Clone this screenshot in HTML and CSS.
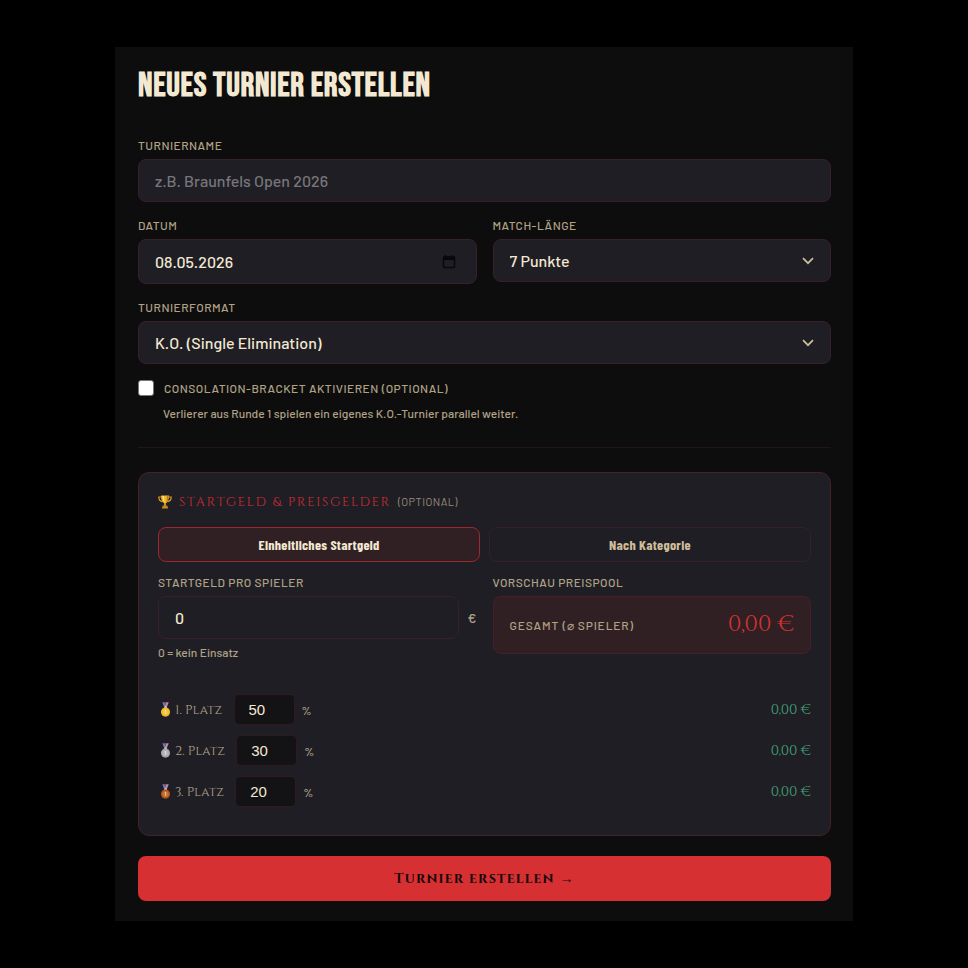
FILE: index.html
```html
<!DOCTYPE html>
<html lang="de">
<head>
<meta charset="utf-8">
<meta name="viewport" content="width=device-width, initial-scale=1">
<title>Neues Turnier erstellen</title>
<link rel="stylesheet" href="styles.css">
</head>
<body>
<svg class="defs" aria-hidden="true">
  <symbol id="medal" viewBox="0 0 12 16">
    <path d="M2.500 0h2.600L7 5.500 5 6.500z" fill="#6a78b8"/>
    <path d="M9.500 0H6.900L5 5.500l2 1z" fill="#b98cae"/>
    <path d="M5.200 0h1.600L6 2.500z" fill="#c44b5c"/>
    <rect x="4.700" y="4.800" width="2.600" height="1.800" rx=".5" fill="#d9c7b0"/>
    <circle cx="6" cy="10.800" r="5" fill="currentColor"/>
    <circle cx="6" cy="10.800" r="3.400" fill="#fff" fill-opacity=".18"/>
    <path d="M5.200 9.600l1-.7v4" fill="none" stroke="#fff" stroke-opacity=".6" stroke-width="1"/>
  </symbol>
</svg>
<main class="panel">
  <h1>NEUES TURNIER ERSTELLEN</h1>
  <form class="form">
    <div class="field">
      <label for="name">TURNIERNAME</label>
      <input class="control" id="name" type="text" placeholder="z.B. Braunfels Open 2026">
    </div>
    <div class="columns">
      <div class="field">
        <label for="date">DATUM</label>
        <div class="date control">
          <input id="date" type="text" inputmode="numeric" value="08.05.2026">
          <button class="picker" type="button" aria-label="Kalender öffnen">
            <svg viewBox="0 0 14 14" width="14" height="14"><path d="M3.500 0v2M10.500 0v2" stroke="#08080a" stroke-width="1.500"/><rect x="1.500" y="2" width="11" height="10.500" rx="1" fill="none" stroke="#08080a" stroke-width="1.500"/><path d="M1 1.500h12v3.500H1z" fill="#08080a"/></svg>
          </button>
        </div>
      </div>
      <div class="field">
        <label for="length">MATCH-LÄNGE</label>
        <div class="select">
          <select class="control" id="length"><option>7 Punkte</option></select>
          <svg class="chevron" viewBox="0 0 12 8" aria-hidden="true"><path d="M1 1.200l5 5 5-5"/></svg>
        </div>
      </div>
    </div>
    <div class="field">
      <label for="format">TURNIERFORMAT</label>
      <div class="select">
        <select class="control" id="format"><option>K.O. (Single Elimination)</option></select>
        <svg class="chevron" viewBox="0 0 12 8" aria-hidden="true"><path d="M1 1.200l5 5 5-5"/></svg>
      </div>
    </div>
    <div class="consolation">
      <div class="check">
        <input id="consolation" type="checkbox">
        <label for="consolation">CONSOLATION-BRACKET AKTIVIEREN (OPTIONAL)</label>
      </div>
      <p class="hint">Verlierer aus Runde 1 spielen ein eigenes K.O.-Turnier parallel weiter.</p>
    </div>
    <hr>
    <section class="card">
      <h2>
        <svg class="trophy" viewBox="0 0 14 14" aria-hidden="true">
          <path d="M3.500 2H.8c0 3 1.200 4.300 3.600 4.600M10.500 2h2.700c0 3-1.200 4.300-3.600 4.600" fill="none" stroke="#d99a22" stroke-width="1.200"/>
          <path d="M3 .5h8c0 4-1 7-3.200 7.800v2.500H6.200V8.300C4 7.500 3 4.500 3 .5z" fill="#eeb52c"/>
          <path d="M4.500 1h1.500c0 3 .3 5 1 6.500C5.300 6.500 4.500 4 4.500 1z" fill="#ffe07a"/>
          <path d="M9 1h1.500c-.2 3.500-1 5.500-2.500 6.500C8.800 5.500 9 3.500 9 1z" fill="#b97916"/>
          <path d="M4.800 10.500h4.400l1 3H3.800z" fill="#c98a1c"/>
        </svg>
        <span class="title">STARTGELD &amp; PREISGELDER</span>
        <span class="optional">(OPTIONAL)</span>
      </h2>
      <div class="tabs">
        <button class="tab active" type="button">Einheitliches Startgeld</button>
        <button class="tab" type="button">Nach Kategorie</button>
      </div>
      <div class="columns">
        <div class="field">
          <label for="fee">STARTGELD PRO SPIELER</label>
          <div class="fee">
            <input class="control" id="fee" type="text" inputmode="decimal" value="0">
            <span>€</span>
          </div>
          <p class="hint">0 = kein Einsatz</p>
        </div>
        <div class="field">
          <div class="caption">VORSCHAU PREISPOOL</div>
          <div class="pool">
            <span class="pool-label">GESAMT (⌀ SPIELER)</span>
            <output class="pool-total">0,00 €</output>
          </div>
        </div>
      </div>
      <div class="places">
        <div class="place">
          <svg class="medal gold" aria-hidden="true"><use href="#medal"/></svg>
          <label for="p1">1. Platz</label>
          <input id="p1" type="text" inputmode="numeric" value="50">
          <span class="percent">%</span>
          <output class="amount">0,00 €</output>
        </div>
        <div class="place">
          <svg class="medal silver" aria-hidden="true"><use href="#medal"/></svg>
          <label for="p2">2. Platz</label>
          <input id="p2" type="text" inputmode="numeric" value="30">
          <span class="percent">%</span>
          <output class="amount">0,00 €</output>
        </div>
        <div class="place">
          <svg class="medal bronze" aria-hidden="true"><use href="#medal"/></svg>
          <label for="p3">3. Platz</label>
          <input id="p3" type="text" inputmode="numeric" value="20">
          <span class="percent">%</span>
          <output class="amount">0,00 €</output>
        </div>
      </div>
    </section>
    <button class="submit" type="submit">Turnier erstellen →</button>
  </form>
</main>
</body>
</html>
```
FILE: styles.css
```css
:root {
  --cream: #f3e9d2;
  --muted: #b0a285;
  --line: #38202a;
  --field: #1f1e25;
  --red: #d73032;
  --sans: Barlow, Roboto, sans-serif;
  --serif: Cinzel, "Liberation Serif", serif;
}

* { box-sizing: border-box; }

body {
  margin: 0;
  padding: 47px 24px;
  background: #000;
  color: var(--cream);
  font: 500 16px/20px var(--sans);
}

h1, h2, p { margin: 0; }
input, select, button { margin: 0; font: inherit; color: inherit; }
.defs { display: none; }

.panel {
  max-width: 738px;
  margin: 0 auto;
  padding: 20px 22px 20px 23px;
  background: #0d0d0e;
}

h1 {
  margin-bottom: 33px;
  font: bold 34px/38px "Bebas Neue", "Liberation Sans Narrow", sans-serif;
  letter-spacing: 0.02em;
}

.form { display: flex; flex-direction: column; gap: 16px; }
.field { display: flex; flex-direction: column; min-width: 0; }

.field > label, .caption {
  margin-bottom: 7px;
  color: var(--muted);
  font-size: 12px;
  line-height: 14px;
  letter-spacing: 0.04em;
}

.control {
  width: 100%;
  height: 43px;
  padding: 0 16px;
  border: 1px solid var(--line);
  border-radius: 8px;
  background: var(--field);
}
.control::placeholder { color: #77767a; opacity: 1; }

.columns {
  display: grid;
  grid-template-columns: 1fr 1fr;
  gap: 16px;
  align-items: start;
}

.date { display: flex; align-items: center; height: 45px; }
.date input {
  flex: 1;
  min-width: 0;
  padding: 0;
  border: 0;
  background: none;
}
.picker { display: flex; padding: 0 4px; border: 0; background: none; }

.select { position: relative; }
.select select { appearance: none; }
.chevron {
  position: absolute;
  top: 18px;
  right: 17px;
  width: 12px;
  height: 8px;
  fill: none;
  stroke: #cbbd9f;
  stroke-width: 1.700;
  pointer-events: none;
}

.check { display: flex; align-items: center; gap: 10px; height: 16px; }
.check input {
  appearance: none;
  width: 16px;
  height: 16px;
  border: 1px solid #777;
  border-radius: 3px;
  background: #fff;
}
.check label {
  color: var(--muted);
  font-size: 12px;
  line-height: 16px;
  letter-spacing: 0.04em;
}
.hint { color: var(--muted); font-size: 12px; line-height: 16px; }
.consolation .hint { margin: 9px 0 0 25px; }

hr {
  width: 100%;
  margin: 10px 0 8px;
  border: 0;
  border-top: 1px solid #211517;
}

.card {
  padding: 19px 19px 28px;
  border: 1px solid #442029;
  border-radius: 11px;
  background: var(--field);
}

h2 {
  display: flex;
  align-items: center;
  margin-bottom: 15px;
  font-weight: 400;
  line-height: 20px;
}
.trophy { width: 14px; height: 14px; margin-right: 7px; }
.title {
  margin-right: 7px;
  color: #c92c32;
  font-family: var(--serif);
  font-size: 13px;
  font-weight: 500;
  letter-spacing: 0.13em;
}
.optional { color: #968c78; font-size: 11px; letter-spacing: 0.04em; }

.tabs {
  display: grid;
  grid-template-columns: 1fr 1fr;
  gap: 9px;
  margin-bottom: 13px;
}
.tab {
  height: 35px;
  padding: 0 12px;
  border: 1px solid #32212a;
  border-radius: 8px;
  background: none;
  color: #cdbd99;
  font: bold 14px/16px "Barlow Condensed", "Liberation Sans Narrow", sans-serif;
  letter-spacing: 0.02em;
}
.tab.active {
  border-color: #9b292d;
  background: #302024;
  color: var(--cream);
}

.fee { display: flex; align-items: center; gap: 9px; margin-bottom: 5px; }
.fee .control { flex: 1; min-width: 0; }
.fee span { color: var(--muted); font-size: 14px; }

.pool {
  display: flex;
  align-items: center;
  justify-content: space-between;
  height: 58px;
  padding: 0 16px;
  border: 1px solid #4a1e29;
  border-radius: 8px;
  background: #302024;
}
.pool-label { color: var(--muted); font-size: 12px; letter-spacing: 0.07em; }
.pool-total { color: var(--red); font: 400 23px/32px var(--serif); }

.places {
  display: flex;
  flex-direction: column;
  gap: 10px;
  margin-top: 34px;
}
.place { display: flex; align-items: center; height: 31px; }
.medal { width: 11px; height: 15px; margin: 0 4px 0 2px; }
.gold { color: #f2b91d; }
.silver { color: #a3a5a8; }
.bronze { color: #b8520f; }
.place label {
  margin-right: 11px;
  color: var(--muted);
  font: 500 13px/20px var(--serif);
}
.place input {
  width: 61px;
  height: 31px;
  padding: 0 14px;
  border: 1px solid #2e1b20;
  border-radius: 5px;
  background: #131316;
  font: 15px/20px "Liberation Sans", sans-serif;
}
.percent { margin-left: 7px; color: var(--muted); font-size: 12px; }
.amount { margin-left: auto; color: #43a577; font: 500 14px/20px var(--serif); }

.submit {
  height: 45px;
  margin-top: 4px;
  border: 0;
  border-radius: 8px;
  background: var(--red);
  color: #16090b;
  font: bold 14px/20px var(--serif);
  letter-spacing: 0.09em;
}
```
